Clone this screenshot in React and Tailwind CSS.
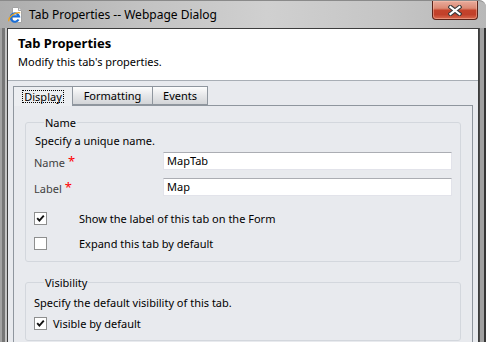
import React from "react";

function IEIcon() {
  return (
    <svg width="15" height="16" viewBox="0 0 15 16">
      <path d="M4.5 0.5 H10.5 L13.5 3.5 V15.5 H4.5 Z" fill="#ffffff" stroke="#a3a3a3" />
      <path d="M10.5 0.5 V3.5 H13.5" fill="#e6e6e6" stroke="#a3a3a3" />
      <path d="M10.6 12.6 A4.2 4.2 0 1 1 11 9.4 H3" fill="none" stroke="#1c6fd6" strokeWidth="2.1" />
      <path d="M0.9 14.2 C -0.2 11, 6 4.8, 12.2 5.8" fill="none" stroke="#f0a21a" strokeWidth="1.2" />
    </svg>
  );
}

function CloseBtn() {
  return (
    <div className="ml-auto mr-[8px] w-[46px] h-[19px] rounded-b-[4px] border border-t-0 border-[#5b2319] bg-[linear-gradient(to_bottom,#e8ab9c_0%,#dc8a74_40%,#c4432b_52%,#c1402a_75%,#d9694e_100%)] flex items-center justify-center shadow-[inset_0_0_0_1px_rgba(255,200,180,0.45)]">
      <svg width="14" height="11" viewBox="0 0 14 11">
        <path d="M2.5 2 L11.5 9 M11.5 2 L2.5 9" stroke="#3b3b3b" strokeWidth="4.2" strokeLinecap="square" />
        <path d="M2.5 2 L11.5 9 M11.5 2 L2.5 9" stroke="#ffffff" strokeWidth="2.2" strokeLinecap="square" />
      </svg>
    </div>
  );
}

function Check({ checked }) {
  return (
    <span className="w-[13px] h-[13px] border border-[#8e8f8f] bg-white flex items-center justify-center shrink-0">
      {checked && (
        <svg width="9" height="9" viewBox="0 0 9 9">
          <path d="M1.2 4.2 L3.4 6.6 L7.8 1.6" stroke="#111" strokeWidth="1.9" fill="none" />
        </svg>
      )}
    </span>
  );
}

function Field({ label, value, top }) {
  return (
    <div className={`flex items-start ${top}`}>
      <div className="w-[129px] mt-[4px] text-[#3f3f3f] leading-[14px] flex items-start">
        <span>{label}</span>
        <span className="text-[#ff0000] ml-[3px] text-[13px] leading-[10px]">*</span>
      </div>
      <div className="flex-1 h-[18px] bg-white border border-[#e2e3ea] border-t-[#abadb3] pl-[3px] leading-[16px] text-black">
        {value}
      </div>
    </div>
  );
}

export default function App() {
  return (
    <div className="w-[486px] h-[342px] overflow-hidden bg-white font-['Noto_Sans',sans-serif]">
      <div className="w-full h-full flex flex-col rounded-tr-[7px] overflow-hidden border-t border-[#8a8a8a] bg-[linear-gradient(to_right,#adadad,#c3c3c3_30%,#d0d0d0_55%,#c5c5c5_80%,#b8b8b8)]">
        <div className="h-[27px] flex items-start shrink-0">
          <div className="mt-[6px] ml-[8px]">
            <IEIcon />
          </div>
          <div className="ml-[6px] mt-[6px] text-[12px] leading-[16px] text-black">
            Tab Properties -- Webpage Dialog
          </div>
          <CloseBtn />
        </div>
        <div className="flex-1 flex min-h-0">
          <div className="w-[7px] shrink-0 bg-[linear-gradient(to_right,#a3a3a3_0px,#a3a3a3_2px,#767676_2px,#767676_5px,#c4c4c4_5px,#c4c4c4_7px)]" />
          <div className="flex-1 min-w-0 flex flex-col border-l border-t border-r border-[#3c3c3c]">
            <div className="h-[52px] shrink-0 bg-white border-b border-[#a8aeb5] pl-[10px] pt-[6px]">
              <div className="text-[13px] leading-[16px] font-bold text-black">Tab Properties</div>
              <div className="mt-[4px] text-[11px] leading-[14px] text-black">Modify this tab's properties.</div>
            </div>
            <div className="flex-1 min-h-0 bg-[#e8eaee] px-[5px] pt-[5px] text-[11px] text-black">
              <div className="flex items-start h-[19px] relative z-10">
                <div className="w-[60px] h-[20px] border border-b-0 border-[#8f969e] bg-[#eceef1] flex items-start justify-center pt-[4px]">
                  <span className="leading-[11px] px-[1px] outline-1 outline-dotted outline-black">Display</span>
                </div>
                <div className="-ml-px w-[81px] h-[19px] border border-[#8f969e] bg-[linear-gradient(to_bottom,#fdfdfd,#e6e7e9_50%,#d3d5d8)] flex items-center justify-center leading-[14px]">
                  Formatting
                </div>
                <div className="-ml-px w-[56px] h-[19px] border border-[#8f969e] bg-[linear-gradient(to_bottom,#fdfdfd,#e6e7e9_50%,#d3d5d8)] flex items-center justify-center leading-[14px]">
                  Events
                </div>
              </div>
              <div className="h-[300px] border border-[#8f969e] px-[11px] pt-[10px]">
                <fieldset className="border border-[#d3d7dd] rounded-[3px] px-[8px] pb-[11px]">
                  <legend className="ml-[10px] px-[1px] leading-[13px]">Name</legend>
                  <div className="mt-[5px] ml-[1px] leading-[14px]">Specify a unique name.</div>
                  <Field label="Name" value="MapTab" top="mt-[4px]" />
                  <Field label="Label" value="Map" top="mt-[8px]" />
                  <div className="mt-[16px] h-[13px] flex items-center">
                    <div className="w-[45px]"><Check checked /></div>
                    <span className="leading-[14px]">Show the label of this tab on the Form</span>
                  </div>
                  <div className="mt-[12px] h-[13px] flex items-center">
                    <div className="w-[45px]"><Check /></div>
                    <span className="leading-[14px]">Expand this tab by default</span>
                  </div>
                </fieldset>
                <fieldset className="mt-[14px] border border-[#d3d7dd] rounded-[3px] px-[8px] pb-[10px]">
                  <legend className="ml-[10px] px-[1px] leading-[13px]">Visibility</legend>
                  <div className="mt-[7px] leading-[14px]">Specify the default visibility of this tab.</div>
                  <div className="mt-[7px] h-[13px] flex items-center">
                    <Check checked />
                    <span className="ml-[6px] leading-[14px]">Visible by default</span>
                  </div>
                </fieldset>
              </div>
            </div>
          </div>
          <div className="w-[7px] shrink-0 bg-[linear-gradient(to_right,#4a4a4a_0px,#4a4a4a_1px,#a0a0a0_1px,#a0a0a0_5px,#353535_5px,#353535_7px)]" />
        </div>
      </div>
    </div>
  );
}
